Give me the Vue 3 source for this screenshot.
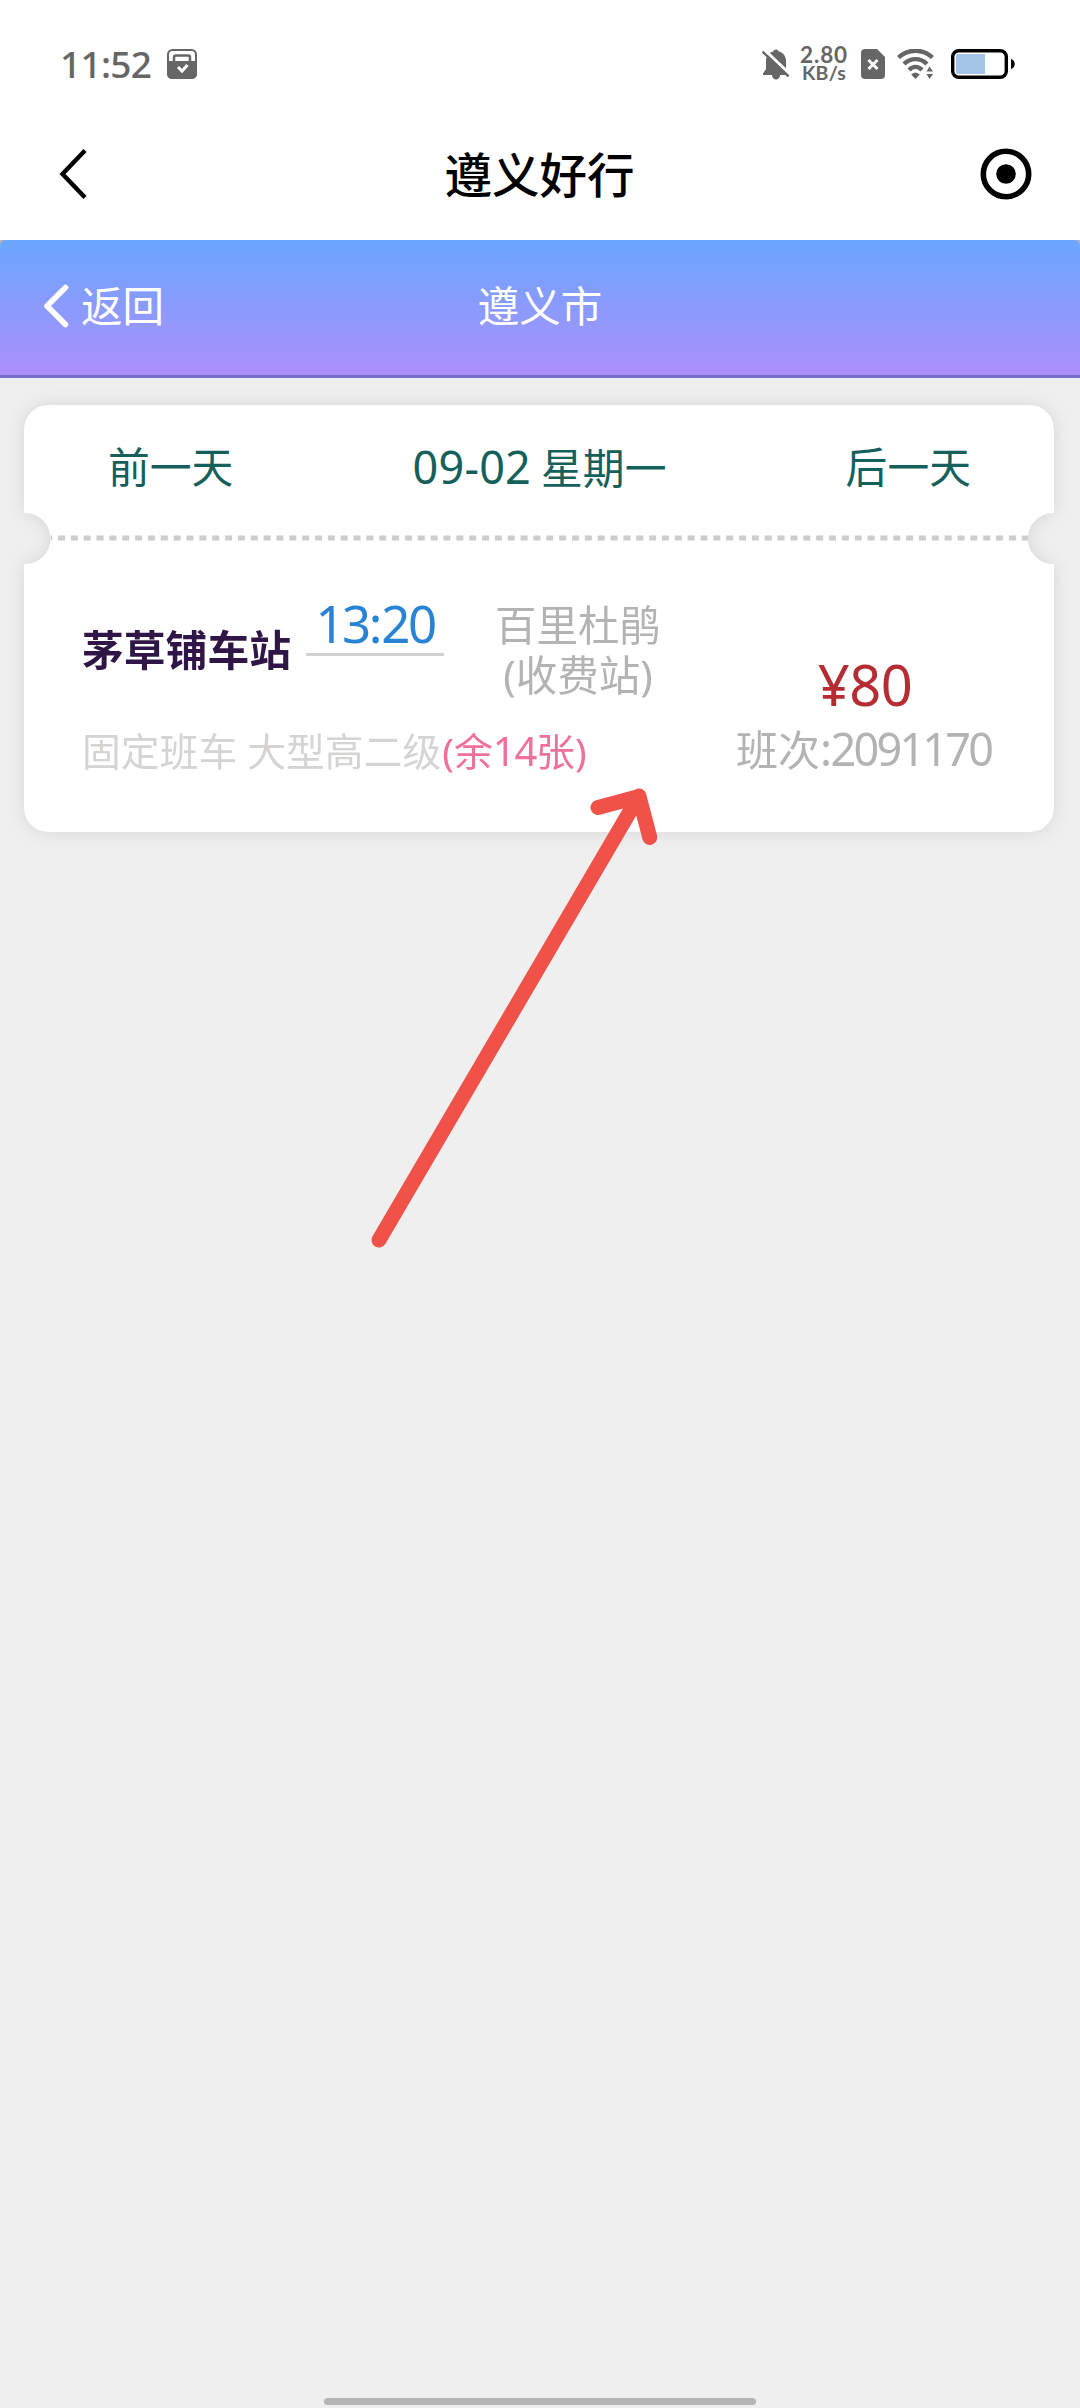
<script setup>
const ticket = {
  from: '茅草铺车站',
  time: ['13', ':', '20'],
  to: '百里杜鹃\n(收费站)',
  kind: '固定班车 大型高二级',
  left: { pre: '(余', count: '14', post: '张)' },
  price: '¥80',
  number: '2091170',
}
</script>

<template>
  <div class="screen">
    <div class="status">
      <span class="clock">11:52</span>
      <svg class="i-bag" width="30" height="30" viewBox="0 0 30 30">
        <rect x="1" y="1" width="28" height="28" rx="4.5" fill="none" stroke="#666" stroke-width="2" />
        <path d="M0 12H30V25a5 5 0 0 1-5 5H5a5 5 0 0 1-5-5Z" fill="#666" />
        <path d="M7 12V8.500a2 2 0 0 1 2-2H21a2 2 0 0 1 2 2V12" fill="none" stroke="#666" stroke-width="2.500" />
        <path d="M11 18l4 4 5.500-6" fill="none" stroke="#fff" stroke-width="3" />
      </svg>
      <span class="grow"></span>
      <svg class="i-bell" width="28" height="31" viewBox="0 0 28 31">
        <path d="M14 0.500c1.700 0 2.500 1 2.800 2C21.500 3.500 24 7.500 24 12v8l3 4.500v1.500H18c0 2.500-1.800 4.500-4 4.500s-4-2-4-4.500H1v-1.500L4 20v-8c0-4.500 2.500-8.500 7.200-9.500.3-1 1.100-2 2.800-2Z" fill="#666" />
        <path d="M2.500 1L28.500 25.500" stroke="#fff" stroke-width="3" />
        <path d="M0.500 2.500L26.500 27.500" stroke="#666" stroke-width="2.400" />
      </svg>
      <span class="speed"><b>2.80</b><i>KB/s</i></span>
      <svg class="i-sim" width="24" height="30" viewBox="0 0 24 30">
        <path d="M4 0H16L24 8V26a4 4 0 0 1-4 4H4a4 4 0 0 1-4-4V4a4 4 0 0 1 4-4Z" fill="#666" />
        <path d="M7.500 11l9 9m0-9l-9 9" stroke="#fff" stroke-width="3" />
      </svg>
      <svg class="i-wifi" width="37" height="30" viewBox="0 0 37 30">
        <g fill="none" stroke="#666" stroke-width="4.400">
          <path d="M1.500 8.500C11-.5 26-.5 35.500 8.500" />
          <path d="M7 15C13.500 8.500 23.500 8.500 30 15" />
          <path d="M12 21C16 17 21 17 25 21" />
        </g>
        <path d="M14.200 25.500c2.500-2.300 6-2.300 8.500 0L18.500 30Z" fill="#666" />
        <path d="M28.500 30V18L32.500 14 37 18V30Z" fill="#fff" />
        <path d="M29.500 22.500L32.500 17.500 36 22.500ZM29.500 25L32.500 30 36 25Z" fill="#666" />
      </svg>
      <svg class="i-batt" width="65" height="30" viewBox="0 0 65 30">
        <rect x="1.700" y="1.700" width="53.600" height="26.600" rx="6" fill="#fff" stroke="#000" stroke-width="3.400" />
        <path d="M7 5H34V25H7a2 2 0 0 1-2-2V7a2 2 0 0 1 2-2Z" fill="#a5c4e9" />
        <path d="M60 10c5 1.500 5 8.500 0 10Z" fill="#000" />
      </svg>
    </div>

    <div class="titlebar">
      <svg width="30" height="54" viewBox="0 0 30 54">
        <path d="M27 3.500L4.500 27 27 50.500" fill="none" stroke="#000" stroke-width="4.400" />
      </svg>
      <h1>遵义好行</h1>
      <svg width="52" height="52" viewBox="0 0 52 52">
        <circle cx="26" cy="26" r="22.700" fill="none" stroke="#000" stroke-width="5.600" />
        <circle cx="26" cy="26" r="9.800" />
      </svg>
    </div>

    <div class="nav-back">
      <div class="nav">
        <div class="back">
          <svg width="28" height="46" viewBox="0 0 28 46">
            <path d="M24.500 4.500L6 23 24.500 41.500" fill="none" stroke="#fff" stroke-width="5.600" stroke-linecap="round" stroke-linejoin="round" />
          </svg>
          <span class="label">返回</span>
        </div>
        <div class="city">遵义市</div>
        <div class="side"></div>
      </div>
    </div>

    <main>
      <div class="shadow">
        <section class="card">
          <div class="days">
            <span class="day">前一天</span>
            <span class="today"><span class="num">09-02</span>星期一</span>
            <span class="day last">后一天</span>
          </div>
          <svg class="perf" width="980" height="6" viewBox="0 0 980 6">
            <line x1="0" y1="3" x2="980" y2="3" stroke="#cdcdcd" stroke-width="5" stroke-dasharray="7 5.850" stroke-dashoffset="-7" />
          </svg>
          <div class="trip">
            <div class="info">
              <div class="route">
                <div class="from">{{ ticket.from }}</div>
                <div class="time">{{ ticket.time[0] }}<span class="colon">{{ ticket.time[1] }}</span>{{ ticket.time[2] }}</div>
                <div class="to">{{ ticket.to }}</div>
              </div>
              <div class="kind">{{ ticket.kind }}<span class="left">{{ ticket.left.pre }}<span class="count">{{ ticket.left.count }}</span>{{ ticket.left.post }}</span></div>
            </div>
            <div class="fare">
              <div class="price">{{ ticket.price }}</div>
              <div class="no">班次<span class="digits"><span class="sep">:</span>{{ ticket.number }}</span></div>
            </div>
          </div>
        </section>
      </div>
    </main>

    <svg class="arrow" width="300" height="480" viewBox="365 780 300 480">
      <path d="M379 1240L639 796M598 807.500L639 796.500 649.800 837.500" fill="none" stroke="#f0524a" stroke-width="15" stroke-linecap="round" stroke-linejoin="round" />
    </svg>
    <div class="home"></div>
  </div>
</template>

<style>
body { background: #efefef; }
</style>

<style scoped>
.screen {
  position: relative;
  display: flex;
  flex-direction: column;
  width: 1080px;
  height: 2408px;
  overflow: hidden;
  background: #efefef;
  font-family: "Noto Sans", "Noto Sans CJK SC", sans-serif;
  white-space: nowrap;
}
svg { display: block; flex: none; }
.status {
  display: flex;
  align-items: center;
  height: 128px;
  padding: 0 64px 0 60px;
  background: #fff;
  box-sizing: border-box;
}
.clock { width: 107px; font-size: 37px; font-weight: 500; letter-spacing: -.7px; color: #666; line-height: 44px; }
.grow { flex: 1; }
.i-bell { margin-right: 9px; }
.speed { width: 50px; margin-right: 12px; color: #666; display: flex; flex-direction: column; align-items: center; line-height: 18.500px; font-family: Lato, "Noto Sans", sans-serif; }
.speed b { font-size: 22.500px; font-weight: 700; letter-spacing: .9px; }
.speed i { font-style: normal; font-size: 19.500px; font-weight: 700; letter-spacing: .2px; }
.i-sim { margin-right: 12px; }
.i-wifi { margin-right: 17px; }
.titlebar {
  display: flex;
  align-items: center;
  justify-content: space-between;
  height: 112px;
  padding: 0 48px 20px 58px;
  background: #fff;
  box-sizing: border-box;
}
h1 { margin: 2px 0 0 11px; font-size: 47.500px; font-weight: 500; line-height: 60px; color: #000; }
.nav-back { background: #b5b5b5; }
.nav {
  display: flex;
  align-items: center;
  height: 138px;
  padding: 0 41px 3px;
  box-sizing: border-box;
  border-bottom: 3px solid #766cc9;
  border-radius: 6px 6px 0 0;
  background: linear-gradient(#69a6ff, #ad8ffb);
  color: #fff;
  font-size: 41.500px;
}
.back, .side { flex: 1; display: flex; align-items: center; }
.label { margin-left: 12px; padding-bottom: 4px; }
.city { padding-bottom: 4px; }
main { padding: 27px 26px 0 24px; }
.shadow { filter: drop-shadow(0 0 9px rgba(0, 0, 0, .1)); }
.card {
  height: 427px;
  border-radius: 24px;
  background: #fff;
  -webkit-mask: radial-gradient(circle at 1px 133.500px, transparent 25px, #000 26px) left / 51% 100% no-repeat,
    radial-gradient(circle at calc(100% - 1px) 133.500px, transparent 25px, #000 26px) right / 51% 100% no-repeat;
  mask: radial-gradient(circle at 1px 133.500px, transparent 25px, #000 26px) left / 51% 100% no-repeat,
    radial-gradient(circle at calc(100% - 1px) 133.500px, transparent 25px, #000 26px) right / 51% 100% no-repeat;
  display: flex;
  flex-direction: column;
}
.days {
  display: flex;
  align-items: center;
  height: 130px;
  padding: 0 83px 6px 84px;
  box-sizing: border-box;
  font-size: 41.800px;
  line-height: 60px;
  color: #15605a;
}
.day { flex: 1; }
.last { text-align: right; }
.num { font-size: 45px; letter-spacing: .2px; margin-right: 10px; }
.perf { margin-left: 27px; }
.trip { display: flex; justify-content: space-between; padding: 54px 60px 0 58px; }
.route { display: flex; height: 106px; }
.from { width: 224px; padding-top: 30px; font-size: 41.800px; font-weight: 700; line-height: 50px; color: #2f1646; }
.time {
  width: 138px;
  height: 58px;
  border-bottom: 3px solid #d2d2d2;
  text-align: center;
  font-size: 51px;
  letter-spacing: -2.600px;
  line-height: 56px;
  color: #2883d4;
}
.colon { letter-spacing: -1px; }
.to { width: 166px; margin-left: 51px; padding-top: 5px; font-size: 41.500px; line-height: 50px; color: #b3b3b3; text-align: center; white-space: pre; }
.kind { margin-top: 25px; font-size: 38.800px; line-height: 50px; color: #d6d4d3; }
.left { margin-left: 1px; color: #f0709c; }
.count { font-size: 40px; letter-spacing: -1.200px; }
.fare { padding-top: 55px; width: 258px; }
.price { text-align: center; font-size: 56px; line-height: 68px; letter-spacing: -.5px; color: #b62c33; }
.no { font-size: 42px; line-height: 62px; color: #b3b3b3; }
.digits { font-size: 45px; letter-spacing: -2.800px; }
.sep { letter-spacing: -1.500px; }
.arrow { position: absolute; left: 365px; top: 780px; }
.home { width: 432px; height: 7px; margin: auto auto 3px; border-radius: 4px; background: #b5b5b5; }
</style>
